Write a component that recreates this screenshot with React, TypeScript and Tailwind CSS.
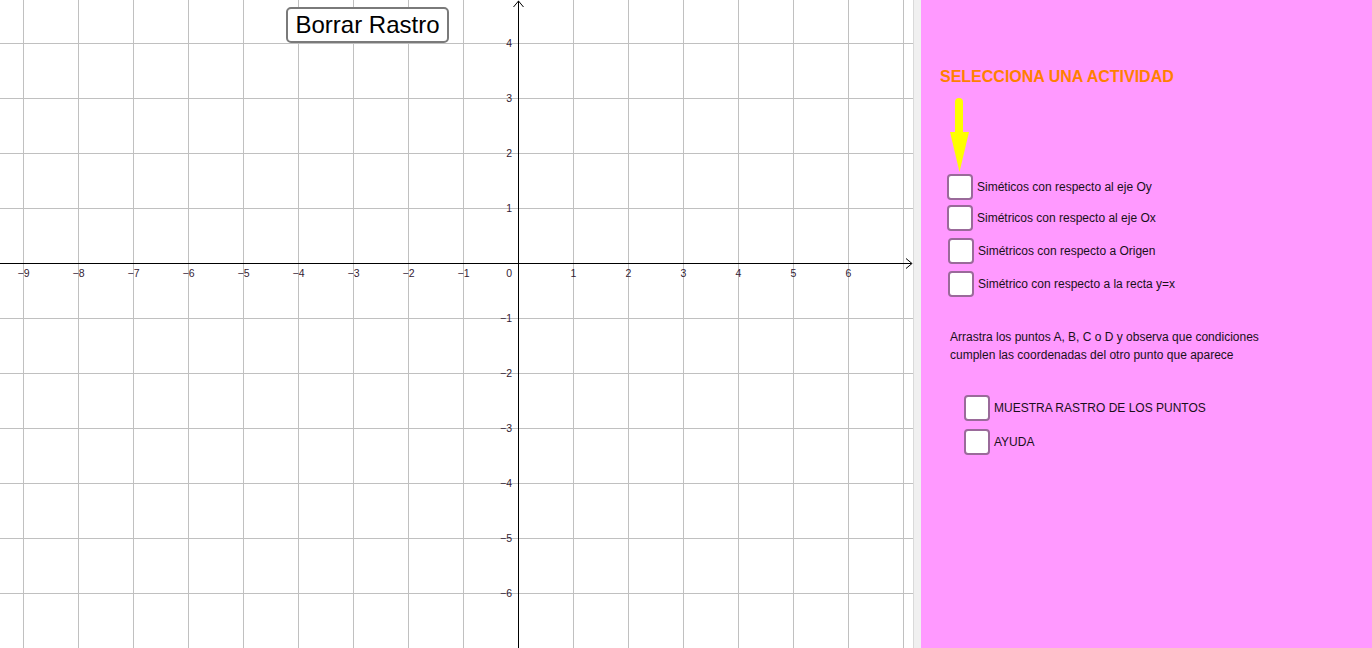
import React from "react";

const ORIGIN_X = 518;
const ORIGIN_Y = 263;
const UNIT = 55;
const GRAPH_W = 913;
const GRAPH_H = 648;

const xs = Array.from({ length: 17 }, (_, i) => i - 9); // -9 .. 7
const ys = Array.from({ length: 12 }, (_, i) => 4 - i); // 4 .. -7

const label = (n: number) => (n < 0 ? `\u2212${Math.abs(n)}` : `${n}`);

function Graph() {
  return (
    <svg
      width={GRAPH_W}
      height={GRAPH_H}
      className="block"
      shapeRendering="crispEdges"
      style={{ fontFamily: '"Liberation Sans", Arial, sans-serif' }}
    >
      <rect width={GRAPH_W} height={GRAPH_H} fill="#ffffff" />
      {/* grid */}
      {xs.map((k) => (
        <line
          key={`gx${k}`}
          x1={ORIGIN_X + k * UNIT + 0.5}
          x2={ORIGIN_X + k * UNIT + 0.5}
          y1={0}
          y2={GRAPH_H}
          stroke="#c0c0c0"
        />
      ))}
      {ys.map((k) => (
        <line
          key={`gy${k}`}
          x1={0}
          x2={GRAPH_W}
          y1={ORIGIN_Y - k * UNIT + 0.5}
          y2={ORIGIN_Y - k * UNIT + 0.5}
          stroke="#c0c0c0"
        />
      ))}

      {/* axes */}
      <line x1={0} x2={911} y1={ORIGIN_Y + 0.5} y2={ORIGIN_Y + 0.5} stroke="#000" />
      <line x1={ORIGIN_X + 0.5} x2={ORIGIN_X + 0.5} y1={1} y2={GRAPH_H} stroke="#000" />
      <polyline
        points={`906,${ORIGIN_Y - 4.5} 912,${ORIGIN_Y + 0.5} 906,${ORIGIN_Y + 5.5}`}
        fill="none"
        stroke="#000"
        shapeRendering="auto"
      />
      <polyline
        points={`${ORIGIN_X - 4.5},7 ${ORIGIN_X + 0.5},1 ${ORIGIN_X + 5.5},7`}
        fill="none"
        stroke="#000"
        shapeRendering="auto"
      />

      {/* x labels */}
      {xs
        .filter((k) => k !== 0 && k !== 7)
        .map((k) => (
          <text
            key={`lx${k}`}
            x={ORIGIN_X + k * UNIT + 0.5}
            y={277}
            fontSize={10.5}
            textAnchor="middle"
            fill="#332233"
          >
            {label(k)}
          </text>
        ))}
      <text x={512} y={277} fontSize={10.5} textAnchor="end" fill="#332233">
        0
      </text>

      {/* y labels */}
      {ys
        .filter((k) => k !== 0 && k !== -7)
        .map((k) => (
          <text
            key={`ly${k}`}
            x={512}
            y={ORIGIN_Y - k * UNIT + 4}
            fontSize={10.5}
            textAnchor="end"
            fill="#332233"
          >
            {label(k)}
          </text>
        ))}
    </svg>
  );
}

function Check({ className, text }: { className: string; text: string }) {
  return (
    <div className={`flex items-center gap-[4px] ${className}`}>
      <span className="block w-[26px] h-[26px] shrink-0 rounded-[4px] border-2 border-[#9a6a9a] bg-white" />
      <span className="text-[12px] leading-4 text-[#1a101a]">{text}</span>
    </div>
  );
}

export default function App() {
  return (
    <div
      className="flex w-full h-[648px] overflow-hidden bg-white"
      style={{ fontFamily: '"Liberation Sans", Arial, sans-serif' }}
    >
      {/* graphics view */}
      <div className="relative w-[913px] shrink-0 h-full">
        <Graph />
        <button className="absolute left-[286px] top-[7px] w-[163px] h-[36px] rounded-[5px] border-2 border-[#7a7a7a] bg-white text-[24px] leading-none text-black">
          Borrar Rastro
        </button>
      </div>

      {/* split bar */}
      <div className="w-[8px] shrink-0 h-full bg-[#f0f0f0] border-l border-[#d9d9d9]" />

      {/* activity panel */}
      <div className="flex-1 h-full bg-[#ff99ff] flex flex-col">
        <h1 className="mt-[68px] ml-[19px] text-[16px] leading-[18px] font-bold text-[#ff8000]">
          SELECCIONA UNA ACTIVIDAD
        </h1>

        <svg width="20" height="74" className="block mt-[12px] ml-[29px]">
          <rect x="5" y="0" width="8" height="40" rx="4" fill="#ffff00" />
          <polygon points="0,34 19,34 9.5,74" fill="#ffff00" />
        </svg>

        <Check className="mt-[2px] ml-[26px]" text="Siméticos con respecto al eje Oy" />
        <Check className="mt-[5px] ml-[26px]" text="Simétricos con respecto al eje Ox" />
        <Check className="mt-[7px] ml-[27px]" text="Simétricos con respecto a Origen" />
        <Check className="mt-[7px] ml-[27px]" text="Simétrico con respecto a la recta y=x" />

        <p className="mt-[31px] ml-[29px] text-[12px] leading-[18px] text-[#1a101a]">
          Arrastra los puntos A, B, C o D y observa que condiciones
          <br />
          cumplen las coordenadas del otro punto que aparece
        </p>

        <Check className="mt-[31px] ml-[43px]" text="MUESTRA RASTRO DE LOS PUNTOS" />
        <Check className="mt-[8px] ml-[43px]" text="AYUDA" />
      </div>
    </div>
  );
}
